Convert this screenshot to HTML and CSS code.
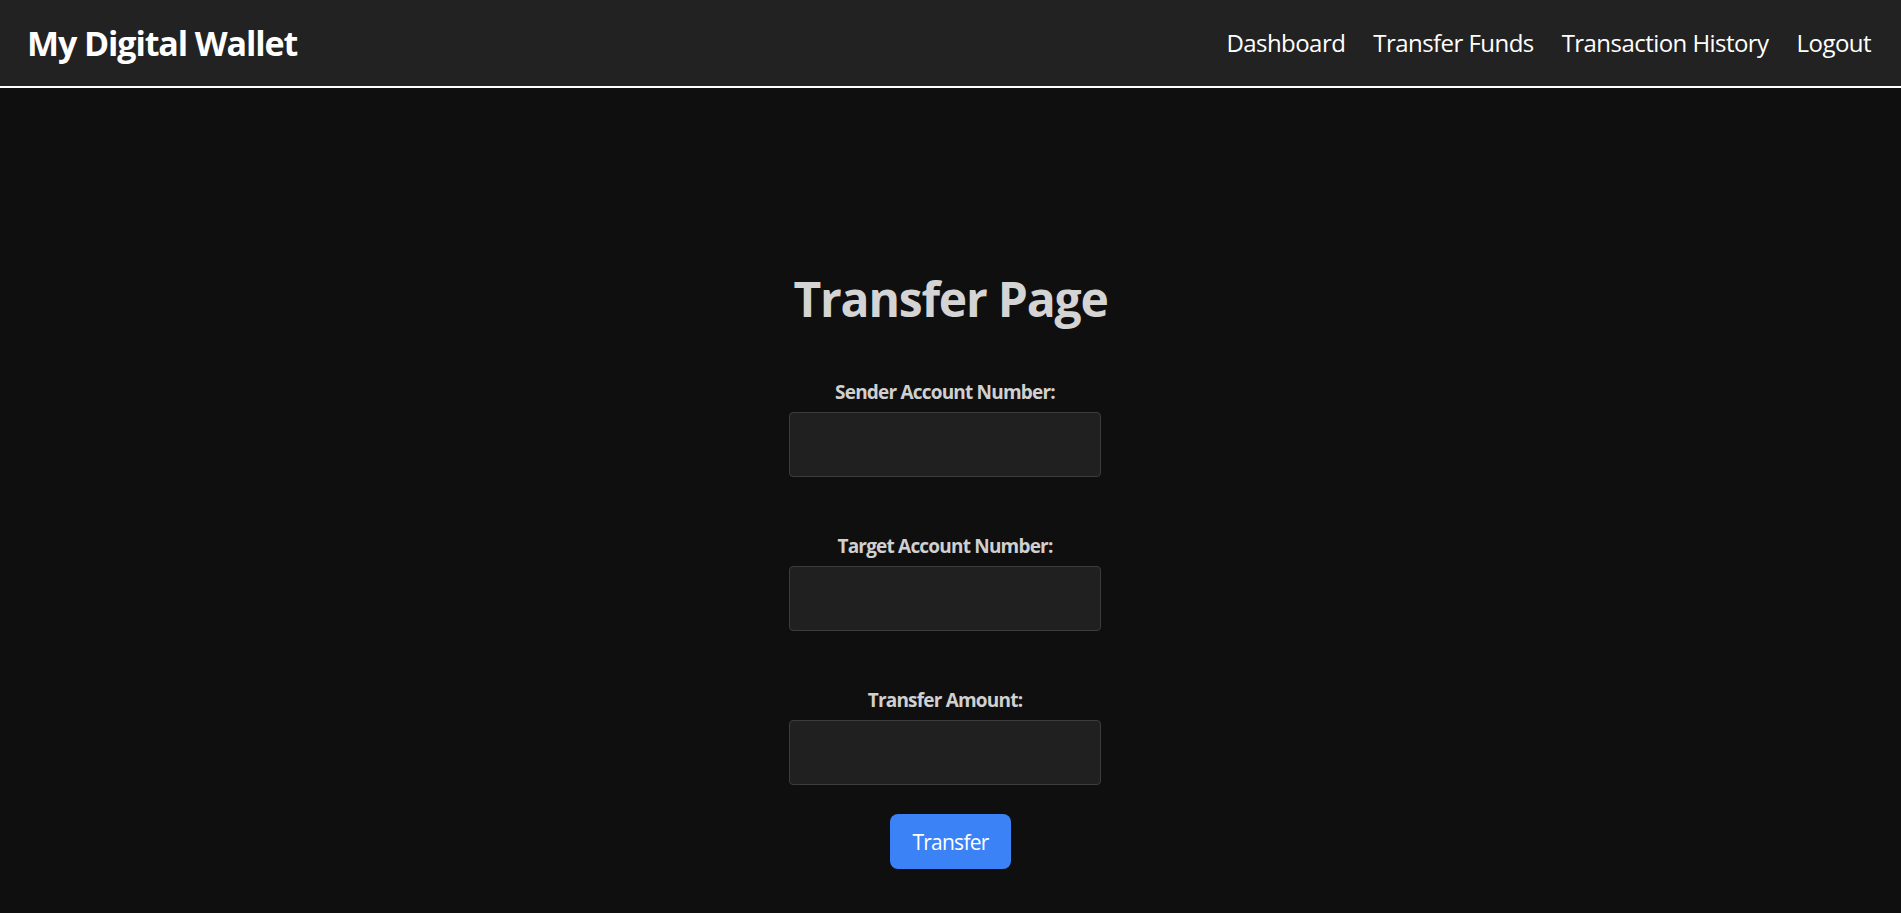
FILE: index.html
```html
<!DOCTYPE html>
<html lang="en">
<head>
    <meta charset="UTF-8">
    <meta name="viewport" content="width=device-width, initial-scale=1.0">
    <title>Transfer Funds - My Digital Wallet</title>
    <link rel="stylesheet" href="styles.css">
</head>
<body>

    <!-- Navigation -->
    <header class="navbar">
        <div class="brand">My Digital Wallet</div>
        <nav class="nav-links">
            <a href="#">Dashboard</a>
            <a href="#">Transfer Funds</a>
            <a href="#">Transaction History</a>
            <a href="#">Logout</a>
        </nav>
    </header>

    <!-- Transfer form -->
    <main class="transfer">
        <h1>Transfer Page</h1>
        <form class="transfer-form" onsubmit="return false;">
            <div class="field">
                <label for="sender">Sender Account Number:</label>
                <input type="text" id="sender" name="sender">
            </div>
            <div class="field">
                <label for="target">Target Account Number:</label>
                <input type="text" id="target" name="target">
            </div>
            <div class="field">
                <label for="amount">Transfer Amount:</label>
                <input type="text" id="amount" name="amount">
            </div>
            <button type="submit" class="btn">Transfer</button>
        </form>
    </main>

</body>
</html>
```

FILE: styles.css
```css
body {
    margin: 0;
    background-color: #0f0f0f;
    font-family: "Open Sans", "Noto Sans", sans-serif;
    color: #d2d2d2;
}

/* ヘッダー */
.navbar {
    display: flex;
    justify-content: space-between;
    align-items: center;
    height: 86px;
    padding: 0 30px 0 27px;
    background-color: #222222;
    border-bottom: 2px solid #ffffff;
}

.brand {
    color: #ffffff;
    font-size: 34px;
    font-weight: 700;
    line-height: 1;
    letter-spacing: -1.1px;
}

.nav-links {
    display: flex;
    gap: 28px;
}

.nav-links a {
    color: #ffffff;
    text-decoration: none;
    font-size: 24px;
    line-height: 1;
    letter-spacing: -0.55px;
}

/* 送金フォーム */
.transfer {
    text-align: center;
    padding-top: 187px;
}

.transfer h1 {
    margin: 0;
    font-size: 48px;
    line-height: 1;
    font-weight: 700;
    letter-spacing: -1.2px;
    color: #d4d4d4;
}

.transfer-form {
    display: flex;
    flex-direction: column;
    align-items: center;
}

.field {
    margin: 60px 11px 0 0;
}

.field label {
    display: block;
    font-size: 19px;
    line-height: 1;
    font-weight: 700;
    letter-spacing: -0.8px;
    color: #d0d0d0;
    margin-bottom: 10px;
}

.field input {
    display: block;
    box-sizing: border-box;
    width: 312px;
    height: 65px;
    background-color: #202020;
    border: 1px solid #3c3c3c;
    border-radius: 4px;
    color: #ffffff;
    font-size: 20px;
    padding: 0 12px;
}

.btn {
    margin-top: 29px;
    width: 121px;
    height: 55px;
    background-color: #3b82f6;
    color: #ffffff;
    border: none;
    border-radius: 8px;
    font-family: inherit;
    font-size: 21px;
    letter-spacing: -0.75px;
    cursor: pointer;
}
```
